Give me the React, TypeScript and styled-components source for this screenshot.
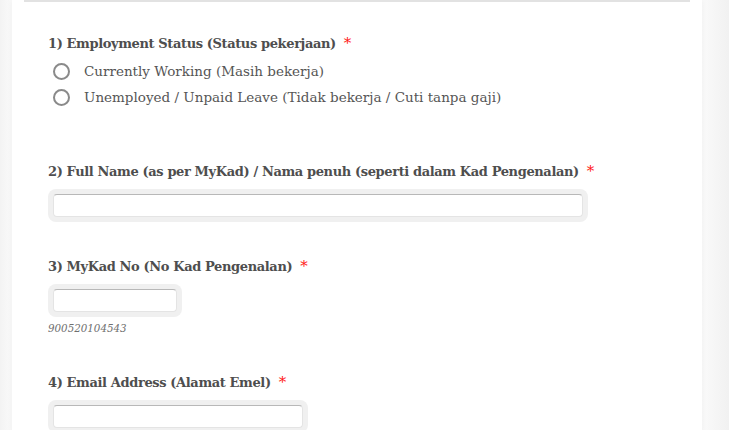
import React from 'react';
import styled, { createGlobalStyle } from 'styled-components';

const GlobalStyle = createGlobalStyle`
    html, body {
        margin: 0;
        padding: 0;
        background: #f6f6f6;
        font-family: "DejaVu Serif", "Liberation Serif", serif;
    }
`;

const Page = styled.div`
    display: flex;
    min-height: 430px;
    padding: 0 27px 0 12px;
    background: linear-gradient(to right, #f3f3f3, #fafafa 12px, #fafafa calc(100% - 27px), #f1f1f1);
    overflow: hidden;
`;

const Card = styled.div`
    flex: 1;
    background: #fff;
    padding: 0 12px;
    box-shadow: 0 0 6px rgba(0, 0, 0, 0.05);
`;

const TopRule = styled.div`
    height: 2px;
    background: #e2e2e2;
`;

const Form = styled.div`
    display: flex;
    flex-direction: column;
    padding: 31px 24px 0;
`;

const Question = styled.div<{ $gap: number }>`
    display: flex;
    flex-direction: column;
    padding-bottom: ${p => p.$gap}px;
`;

const Label = styled.div`
    font-size: 13px;
    font-weight: bold;
    letter-spacing: -0.38px;
    line-height: 20px;
    color: #4e4e4e;
`;

const Required = styled.span`
    color: #ff1a1a;
    font-weight: normal;
    font-size: 15px;
    margin-left: 8px;
`;

const Options = styled.div`
    display: flex;
    flex-direction: column;
    margin-top: 4px;
`;

const Option = styled.label`
    display: flex;
    align-items: center;
    height: 26px;
    padding-left: 5px;
    font-size: 13.5px;
    color: #555;
`;

const Radio = styled.span`
    width: 13px;
    height: 13px;
    border: 2px solid #8a8a8a;
    border-radius: 50%;
    margin-right: 14px;
    flex-shrink: 0;
`;

const FieldFrame = styled.div<{ $width: number }>`
    width: ${p => p.$width}px;
    box-sizing: border-box;
    margin-top: 7px;
    padding: 5px;
    background: #f0f0f0;
    border-radius: 8px;
`;

const TextInput = styled.input`
    display: block;
    width: 100%;
    height: 23px;
    box-sizing: border-box;
    border: 1px solid #e4e4e4;
    border-top-color: #b8b8b8;
    border-radius: 4px;
    background: #fff;
    outline: none;
    font-family: inherit;
`;

const Hint = styled.div`
    margin-top: 4px;
    font-size: 10.3px;
    font-style: italic;
    line-height: 14px;
    color: #6f6f6f;
`;

export default function App() {
    return (
        <>
            <GlobalStyle />
            <Page>
                <Card>
                    <TopRule />
                    <Form>
                        <Question $gap={51}>
                            <Label>1) Employment Status (Status pekerjaan)<Required>*</Required></Label>
                            <Options>
                                <Option><Radio />Currently Working (Masih bekerja)</Option>
                                <Option><Radio />Unemployed / Unpaid Leave (Tidak bekerja / Cuti tanpa gaji)</Option>
                            </Options>
                        </Question>
                        <Question $gap={34}>
                            <Label>2) Full Name (as per MyKad) / Nama penuh (seperti dalam Kad Pengenalan)<Required>*</Required></Label>
                            <FieldFrame $width={540}><TextInput type='text' /></FieldFrame>
                        </Question>
                        <Question $gap={37}>
                            <Label>3) MyKad No (No Kad Pengenalan)<Required>*</Required></Label>
                            <FieldFrame $width={134}><TextInput type='text' /></FieldFrame>
                            <Hint>900520104543</Hint>
                        </Question>
                        <Question $gap={0}>
                            <Label>4) Email Address (Alamat Emel)<Required>*</Required></Label>
                            <FieldFrame $width={260}><TextInput type='text' /></FieldFrame>
                        </Question>
                    </Form>
                </Card>
            </Page>
        </>
    );
}
